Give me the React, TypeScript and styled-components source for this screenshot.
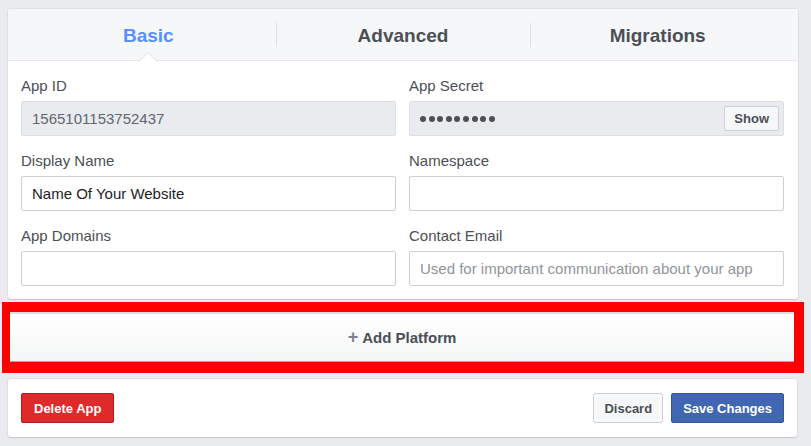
import React from "react";
import styled, { createGlobalStyle } from "styled-components";

const Global = createGlobalStyle`
  html, body { margin: 0; padding: 0; background: #e9ebee; }
  body { font-family: "Liberation Sans", Arial, Helvetica, sans-serif; }
  * { box-sizing: border-box; }
`;

const Page = styled.div`
  padding: 9px 0 0 8px;
  width: 811px;
  height: 446px;
  overflow: hidden;
`;

const Card = styled.div`
  width: 790px;
  background: #fff;
  border-radius: 3px;
  box-shadow: 0 0 0 1px rgba(0, 0, 0, 0.04), 0 1px 1px rgba(0, 0, 0, 0.12);
`;

const TabBar = styled.div`
  display: grid;
  grid-template-columns: repeat(3, 1fr);
  padding: 0 13px;
  height: 52px;
  background: #f6f7f9;
  border-bottom: 1px solid #e5e6e9;
  border-radius: 3px 3px 0 0;
`;

const Tab = styled.div<{ $active?: boolean; $first?: boolean }>`
  position: relative;
  display: flex;
  align-items: center;
  justify-content: center;
  padding-top: 3px;
  font-size: 19px;
  font-weight: bold;
  color: ${(p) => (p.$active ? "#5890ff" : "#4b4f56")};
  &::before {
    content: "";
    display: ${(p) => (p.$first ? "none" : "block")};
    position: absolute;
    left: 0;
    top: 14px;
    bottom: 13px;
    width: 1px;
    background: #dddfe2;
  }
`;

const Arrow = styled.span`
  position: absolute;
  left: 50%;
  bottom: -1px;
  width: 0;
  height: 0;
  margin-left: -9px;
  border-left: 9px solid transparent;
  border-right: 9px solid transparent;
  border-bottom: 9px solid #dddfe2;
  &::after {
    content: "";
    position: absolute;
    left: -8px;
    top: 1px;
    border-left: 8px solid transparent;
    border-right: 8px solid transparent;
    border-bottom: 8px solid #fff;
  }
`;

const Body = styled.div`
  display: grid;
  grid-template-columns: 1fr 1fr;
  column-gap: 13px;
  row-gap: 15px;
  padding: 15px 14px 13px 13px;
`;

const Field = styled.div`
  display: flex;
  flex-direction: column;
`;

const Label = styled.div`
  font-size: 15px;
  line-height: 20px;
  color: #4b4f56;
  margin-bottom: 5px;
`;

const Box = styled.div<{ $disabled?: boolean; $muted?: boolean; $placeholder?: boolean }>`
  height: 35px;
  display: flex;
  align-items: center;
  justify-content: space-between;
  padding: 0 4px 0 10px;
  border: 1px solid ${(p) => (p.$disabled ? "#dddfe2" : "#ccd0d5")};
  background: ${(p) => (p.$disabled ? "#e9ebee" : "#fff")};
  border-radius: 2px;
  font-size: 15px;
  color: ${(p) => (p.$placeholder ? "#90949c" : p.$muted ? "#606770" : "#1d2129")};
`;

const Dots = styled.span`
  display: flex;
  gap: 2.6px;
`;

const Dot = styled.span`
  width: 6px;
  height: 6px;
  border-radius: 50%;
  background: #4b4f56;
`;

const SmallButton = styled.button`
  height: 25px;
  padding: 0 9px;
  font-family: inherit;
  font-size: 13px;
  font-weight: bold;
  color: #4b4f56;
  background: #f6f7f9;
  border: 1px solid #ced0d4;
  border-radius: 2px;
`;

const Highlight = styled.div`
  margin: 3px 0 6px -6px;
  width: 802px;
  border-style: solid;
  border-color: #ff0000;
  border-width: 10px 10px 11px 8px;
`;

const AddPlatform = styled.div`
  height: 50px;
  display: flex;
  align-items: center;
  justify-content: center;
  gap: 4px;
  background: linear-gradient(#ffffff, #f5f6f7);
  border-top: 2px solid #dadde1;
  border-bottom: 1px solid #a7aaaf;
  font-size: 15px;
  font-weight: bold;
  color: #4b4f56;
`;

const Plus = styled.span`
  color: #7f838a;
  font-weight: bold;
  font-size: 18px;
  line-height: 1;
  margin-top: -2px;
`;

const Footer = styled.div`
  width: 789px;
  height: 58px;
  display: flex;
  align-items: center;
  padding: 0 13px;
  background: #fff;
  border-radius: 3px;
  box-shadow: 0 0 0 1px rgba(0, 0, 0, 0.04), 0 1px 1px rgba(0, 0, 0, 0.12);
`;

const Spacer = styled.div`
  flex: 1;
`;

const Button = styled.button<{ $variant: "danger" | "default" | "primary" }>`
  height: 30px;
  padding: 0 ${(p) => (p.$variant === "danger" ? "12px" : p.$variant === "default" ? "10px" : "11px")};
  font-family: inherit;
  font-size: 13px;
  font-weight: bold;
  border-radius: 2px;
  margin-left: ${(p) => (p.$variant === "primary" ? "8px" : "0")};
  color: ${(p) => (p.$variant === "default" ? "#4b4f56" : "#fff")};
  background: ${(p) =>
    p.$variant === "danger" ? "#df2a2b" : p.$variant === "primary" ? "#4267b2" : "#f6f7f9"};
  border: 1px solid
    ${(p) => (p.$variant === "danger" ? "#b3191b" : p.$variant === "primary" ? "#365899" : "#ced0d4")};
`;

export default function App() {
  const dots = Array.from({ length: 9 });
  return (
    <Page>
      <Global />
      <Card>
        <TabBar>
          <Tab $active $first>
            Basic
            <Arrow />
          </Tab>
          <Tab>Advanced</Tab>
          <Tab>Migrations</Tab>
        </TabBar>
        <Body>
          <Field>
            <Label>App ID</Label>
            <Box $disabled $muted>1565101153752437</Box>
          </Field>
          <Field>
            <Label>App Secret</Label>
            <Box $disabled>
              <Dots>
                {dots.map((_, i) => (
                  <Dot key={i} />
                ))}
              </Dots>
              <SmallButton>Show</SmallButton>
            </Box>
          </Field>
          <Field>
            <Label>Display Name</Label>
            <Box>Name Of Your Website</Box>
          </Field>
          <Field>
            <Label>Namespace</Label>
            <Box />
          </Field>
          <Field>
            <Label>App Domains</Label>
            <Box />
          </Field>
          <Field>
            <Label>Contact Email</Label>
            <Box $placeholder>Used for important communication about your app</Box>
          </Field>
        </Body>
      </Card>
      <Highlight>
        <AddPlatform>
          <Plus>+</Plus>
          <span>Add Platform</span>
        </AddPlatform>
      </Highlight>
      <Footer>
        <Button $variant="danger">Delete App</Button>
        <Spacer />
        <Button $variant="default">Discard</Button>
        <Button $variant="primary">Save Changes</Button>
      </Footer>
    </Page>
  );
}
